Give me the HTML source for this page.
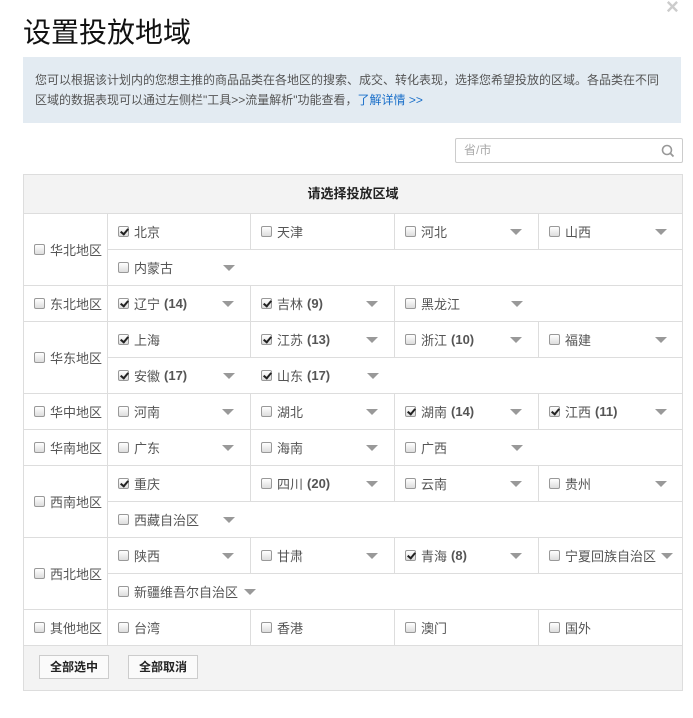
<!DOCTYPE html><html><head><meta charset="utf-8"><style>
*{box-sizing:border-box;margin:0;padding:0}
body{width:693px;height:718px;background:#fff;font-family:"Liberation Sans","Noto Sans CJK SC",sans-serif;color:#555;font-size:13px;position:relative;overflow:hidden}
.title{position:absolute;left:23px;top:11px;font-size:28px;color:#111}
.x{position:absolute;left:666px;top:-6px;font-size:22px;color:#ccc;font-weight:bold}
.info{position:absolute;left:23px;top:57px;width:658px;height:66px;background:#e3ebf2;font-size:12px;line-height:20px;padding:13px 12px;color:#555}
.info a{color:#1a6fc9;text-decoration:none}
.search{position:absolute;left:455px;top:138px;width:228px;height:25px;border:1px solid #ccc;border-radius:2px;color:#aaa;font-size:12px;line-height:23px;padding-left:8px}
.search svg{position:absolute;right:7px;top:5px}
.tbl{position:absolute;left:23px;top:174px;width:660px;border:1px solid #ddd}
.hd{height:39px;background:#f3f3f3;border-bottom:1px solid #ddd;text-align:center;line-height:38px;font-weight:bold;color:#222}
.grp{display:flex;border-bottom:1px solid #ddd}
.rg{width:84px;border-right:1px solid #ddd;display:flex;align-items:center;padding-left:10px;flex-shrink:0}
.cs{flex:1}
.r{display:flex;height:35px}
.r+.r{border-top:1px solid #ddd;height:36px}
.c{width:144px;display:flex;align-items:center;padding-left:10px;padding-right:16px;border-right:1px solid #ddd;white-space:nowrap}
.c:first-child{width:143px}
.c:last-child,.c.n{border-right:none}
.r.s .c{border-right:none;width:auto;min-width:143px}
.cb{width:11px;height:11px;border:1px solid #999;border-radius:2px;background:linear-gradient(#fff,#ddd);margin-right:5px;position:relative;flex-shrink:0}
.cb.k::after{content:"";position:absolute;left:3px;top:0px;width:3px;height:6px;border:solid #222;border-width:0 2px 2px 0;transform:rotate(40deg)}
.ar{width:0;height:0;border-left:6px solid transparent;border-right:6px solid transparent;border-top:6px solid #999;margin-left:auto}
.r.s .c span.t{margin-right:6px}
b{font-weight:bold;margin-left:4px}
.ft{height:44px;background:#f3f3f3;padding:9px 0 0 15px}
.btn{display:inline-block;height:24px;line-height:22px;padding:0 10px;border:1px solid #ccc;background:#fafafa;font-weight:bold;color:#222;font-size:12px;margin-right:19px}
</style></head><body>
<div class="title">设置投放地域</div><div class="x">×</div>
<div class="info">您可以根据该计划内的您想主推的商品品类在各地区的搜索、成交、转化表现，选择您希望投放的区域。各品类在不同区域的数据表现可以通过左侧栏"工具>>流量解析"功能查看，<a>了解详情 &gt;&gt;</a></div>
<div class="search">省/市<svg width="14" height="14" viewBox="0 0 14 14"><circle cx="6" cy="6" r="4.5" fill="none" stroke="#999" stroke-width="1.6"/><path d="M9.3 9.3L12.5 12.5" stroke="#999" stroke-width="1.8"/></svg></div>
<div class="tbl">
<div class="hd">请选择投放区域</div>
<div class="grp"><div class="rg"><span class="cb"></span>华北地区</div><div class="cs">
<div class="r"><div class="c"><span class="cb k"></span>北京</div><div class="c"><span class="cb"></span>天津</div><div class="c"><span class="cb"></span>河北<span class="ar"></span></div><div class="c"><span class="cb"></span>山西<span class="ar"></span></div></div>
<div class="r s"><div class="c"><span class="cb"></span><span class="t">内蒙古</span><span class="ar"></span></div></div></div></div>
<div class="grp"><div class="rg"><span class="cb"></span>东北地区</div><div class="cs">
<div class="r"><div class="c"><span class="cb k"></span>辽宁<b>(14)</b><span class="ar"></span></div><div class="c"><span class="cb k"></span>吉林<b>(9)</b><span class="ar"></span></div><div class="c n"><span class="cb"></span>黑龙江<span class="ar"></span></div></div></div></div>
<div class="grp"><div class="rg"><span class="cb"></span>华东地区</div><div class="cs">
<div class="r"><div class="c"><span class="cb k"></span>上海</div><div class="c"><span class="cb k"></span>江苏<b>(13)</b><span class="ar"></span></div><div class="c"><span class="cb"></span>浙江<b>(10)</b><span class="ar"></span></div><div class="c"><span class="cb"></span>福建<span class="ar"></span></div></div>
<div class="r"><div class="c n"><span class="cb k"></span>安徽<b>(17)</b><span class="ar"></span></div><div class="c n"><span class="cb k"></span>山东<b>(17)</b><span class="ar"></span></div></div></div></div>
<div class="grp"><div class="rg"><span class="cb"></span>华中地区</div><div class="cs">
<div class="r"><div class="c"><span class="cb"></span>河南<span class="ar"></span></div><div class="c"><span class="cb"></span>湖北<span class="ar"></span></div><div class="c"><span class="cb k"></span>湖南<b>(14)</b><span class="ar"></span></div><div class="c"><span class="cb k"></span>江西<b>(11)</b><span class="ar"></span></div></div></div></div>
<div class="grp"><div class="rg"><span class="cb"></span>华南地区</div><div class="cs">
<div class="r"><div class="c"><span class="cb"></span>广东<span class="ar"></span></div><div class="c"><span class="cb"></span>海南<span class="ar"></span></div><div class="c n"><span class="cb"></span>广西<span class="ar"></span></div></div></div></div>
<div class="grp"><div class="rg"><span class="cb"></span>西南地区</div><div class="cs">
<div class="r"><div class="c"><span class="cb k"></span>重庆</div><div class="c"><span class="cb"></span>四川<b>(20)</b><span class="ar"></span></div><div class="c"><span class="cb"></span>云南<span class="ar"></span></div><div class="c"><span class="cb"></span>贵州<span class="ar"></span></div></div>
<div class="r s"><div class="c"><span class="cb"></span><span class="t">西藏自治区</span><span class="ar"></span></div></div></div></div>
<div class="grp"><div class="rg"><span class="cb"></span>西北地区</div><div class="cs">
<div class="r"><div class="c"><span class="cb"></span>陕西<span class="ar"></span></div><div class="c"><span class="cb"></span>甘肃<span class="ar"></span></div><div class="c"><span class="cb k"></span>青海<b>(8)</b><span class="ar"></span></div><div class="c" style="padding-right:10px"><span class="cb"></span>宁夏回族自治区<span class="ar"></span></div></div>
<div class="r s"><div class="c"><span class="cb"></span><span class="t">新疆维吾尔自治区</span><span class="ar"></span></div></div></div></div>
<div class="grp"><div class="rg"><span class="cb"></span>其他地区</div><div class="cs">
<div class="r"><div class="c"><span class="cb"></span>台湾</div><div class="c"><span class="cb"></span>香港</div><div class="c"><span class="cb"></span>澳门</div><div class="c"><span class="cb"></span>国外</div></div></div></div>
<div class="ft"><span class="btn">全部选中</span><span class="btn">全部取消</span></div>
</div>
</body></html>
